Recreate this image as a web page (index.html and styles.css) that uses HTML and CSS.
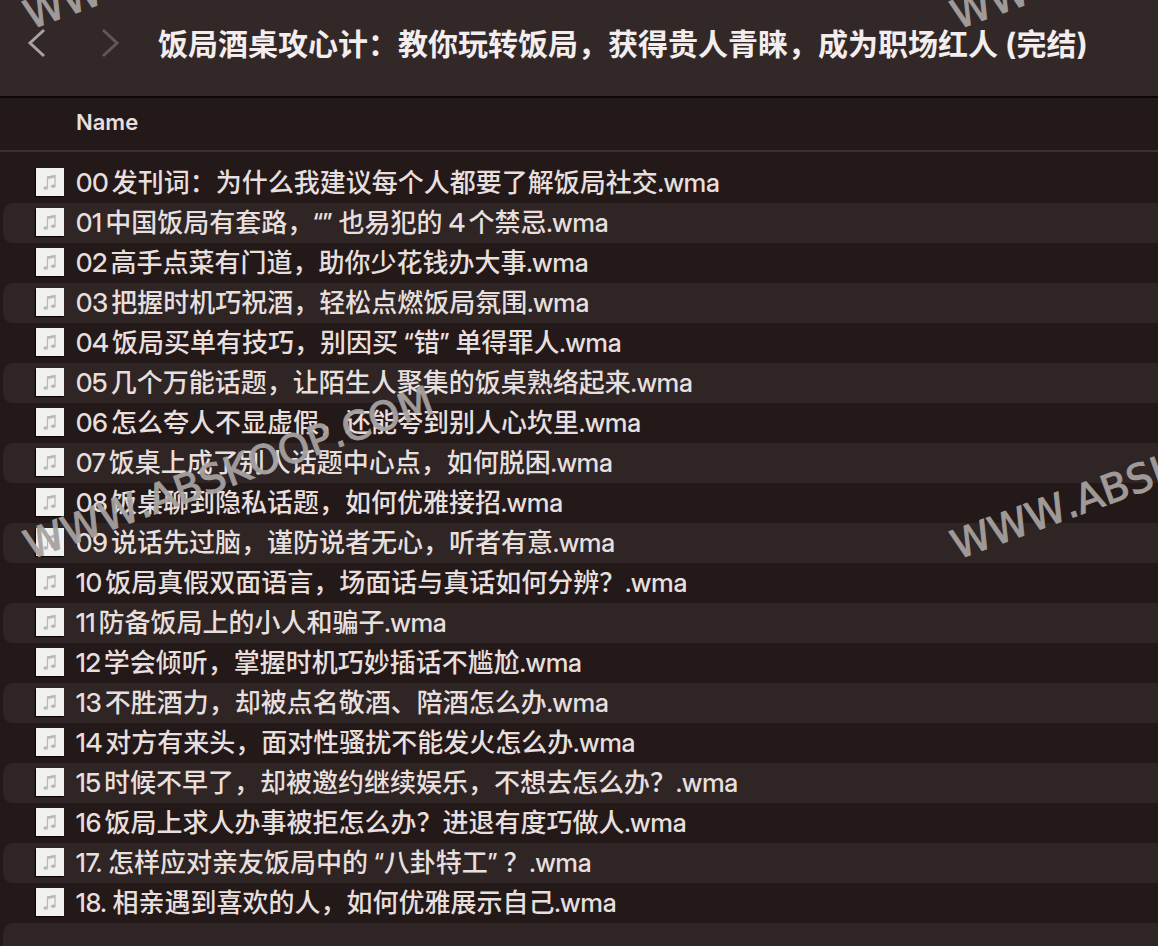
FILE: index.html
```
<!DOCTYPE html>

<html lang="zh-CN">
    <head>
        <meta charset="utf-8">
        <title>饭局酒桌攻心计</title>
        <link rel="stylesheet" href="styles.css">
        <script src="files.js" defer></script>
    </head>

    <body>

        <!-- one note icon, shared by all the rows -->
        <svg class="defs" width="0" height="0" aria-hidden="true">
            <symbol id="note" viewBox="0 0 28 28">
                <path d="M11.500 19.500V9L19 7.500v10.500" fill="none" stroke="#b4b8b6" stroke-width="1.2"/>
                <path d="M11.500 8.700L19 7.200v2.300L11.500 11z" fill="#b4b8b6"/>
                <ellipse cx="9.700" cy="20" rx="2.300" ry="1.700" fill="#b4b8b6"/>
                <ellipse cx="17.200" cy="18.300" rx="2.300" ry="1.700" fill="#b4b8b6"/>
            </symbol>
        </svg>

        <div class="window">

            <header class="toolbar">
                <button class="nav" type="button" aria-label="Back">
                    <svg width="20" height="30" viewBox="0 0 20 30"><path d="M17 2L3 15l14 13"/></svg>
                </button>
                <button class="nav" type="button" aria-label="Forward" disabled>
                    <svg width="20" height="30" viewBox="0 0 20 30"><path d="M3 2l14 13L3 28"/></svg>
                </button>
                <h1 class="title">饭局酒桌攻心计：教你玩转饭局，获得贵人青睐，成为职场红人 (完结)</h1>
            </header>

            <table class="files">
                <thead>
                    <tr><th scope="col">Name</th></tr>
                </thead>
                <tbody id="rows"></tbody>
            </table>

            <div class="watermarks" aria-hidden="true">
                <span class="mark top left">WWW.ABSKOOP.COM</span>
                <span class="mark top right">WWW.ABSKOOP.COM</span>
                <span class="mark middle left">WWW.ABSKOOP.COM</span>
                <span class="mark middle right">WWW.ABSKOOP.COM</span>
            </div>

        </div>

    </body>

</html>
```

FILE: styles.css
```
body
{
    margin: 0;
    background-color: #231918;
    color: #e6dfde;
    font-family: Inter, "Noto Sans CJK SC", sans-serif;
}

.defs
{
    position: absolute;
}

.window
{
    position: relative;
    height: 100vh;
    overflow: hidden;
}

/* Title bar */

.toolbar
{
    display: flex;
    align-items: flex-start;
    box-sizing: border-box;
    height: 98px;
    padding: 22px 0 0 16px;
    background-color: #322828;
    border-bottom: 2px solid #0d0606;
}

.nav
{
    width: 42px;
    height: 42px;
    margin-right: 31px;
    padding: 0;
    border: 0;
    background: none;
    color: #aaa2a1;
}

.nav:disabled
{
    color: #615757;
}

.nav svg
{
    display: block;
    margin: auto;
    fill: none;
    stroke: currentColor;
    stroke-width: 3;
}

.title
{
    margin: 0 0 0 -4px;
    color: #f3edee;
    font-size: 30px;
    font-weight: 700;
    line-height: 44px;
    white-space: nowrap;
}

/* File list */

.files
{
    width: 100%;
    border-spacing: 0;
}

.files th
{
    height: 48px;
    padding: 0 0 4px 76px;
    border-bottom: 2px solid #3a302f;
    font-size: 22px;
    font-weight: 600;
    text-align: left;
}

.files tbody::before
{
    content: "";
    display: block;
    height: 11px;
}

.files td
{
    height: 40px;
    padding: 0;
    border-left: 3px solid transparent;
    border-radius: 12px 0 0 12px;
    background-clip: padding-box;
}

.files tbody tr:nth-child(even) td
{
    background-color: #2e2524;
}

.file
{
    display: flex;
    align-items: center;
    gap: 12px;
    padding-left: 33px;
    font-family: "Inter Display", Inter, "Noto Sans CJK SC", sans-serif;
    font-size: 26px;
    font-weight: 500;
    font-variation-settings: "opsz" 32;
    line-height: 40px;
    text-autospace: normal;
    white-space: nowrap;
}

.ext
{
    display: inline-block;
}

.icon
{
    width: 28px;
    height: 28px;
    margin-bottom: 2px;
    background-color: #f1f1f0;
    box-shadow: -1px 1px 1px #0c0505;
}

/* Watermarks */

.watermarks
{
    position: absolute;
    inset: 0;
    overflow: hidden;
    pointer-events: none;
}

.mark
{
    position: absolute;
    color: #a7a2a1;
    font-family: "DejaVu Sans", sans-serif;
    font-size: 40px;
    font-kerning: none;
    line-height: 42px;
    opacity: 0.94;
    transform: rotate(-20deg);
    transform-origin: left bottom;
    -webkit-text-stroke: 1px #a7a2a1;
}

.top
{
    top: -6px;
}

.middle
{
    top: 524px;
}

.left
{
    left: 33px;
}

.right
{
    left: 960px;
}
```

FILE: files.js
```
var files = [
    '00发刊词：为什么我建议每个人都要了解饭局社交.wma',
    '01中国饭局有套路，“” 也易犯的 4个禁忌.wma',
    '02高手点菜有门道，助你少花钱办大事.wma',
    '03把握时机巧祝酒，轻松点燃饭局氛围.wma',
    '04饭局买单有技巧，别因买 “错” 单得罪人.wma',
    '05几个万能话题，让陌生人聚集的饭桌熟络起来.wma',
    '06怎么夸人不显虚假，还能夸到别人心坎里.wma',
    '07饭桌上成了别人话题中心点，如何脱困.wma',
    '08饭桌聊到隐私话题，如何优雅接招.wma',
    '09说话先过脑，谨防说者无心，听者有意.wma',
    '10饭局真假双面语言，场面话与真话如何分辨？.wma',
    '11防备饭局上的小人和骗子.wma',
    '12学会倾听，掌握时机巧妙插话不尴尬.wma',
    '13不胜酒力，却被点名敬酒、陪酒怎么办.wma',
    '14对方有来头，面对性骚扰不能发火怎么办.wma',
    '15时候不早了，却被邀约继续娱乐，不想去怎么办？.wma',
    '16饭局上求人办事被拒怎么办？进退有度巧做人.wma',
    '17. 怎样应对亲友饭局中的 “八卦特工” ？.wma',
    '18. 相亲遇到喜欢的人，如何优雅展示自己.wma'
];

var rows = document.getElementById ('rows');

files.forEach (function (name)
{
    var cell = rows.insertRow ().insertCell ();
    var dot = name.lastIndexOf ('.');
    cell.innerHTML = '<div class="file"><svg class="icon"><use href="#note"/></svg>' +
        '<span>' + name.slice (0, dot) + '<span class="ext">' + name.slice (dot) + '</span></span></div>';
});

// the stripes go on below the last file
rows.insertRow ().insertCell ();
```
